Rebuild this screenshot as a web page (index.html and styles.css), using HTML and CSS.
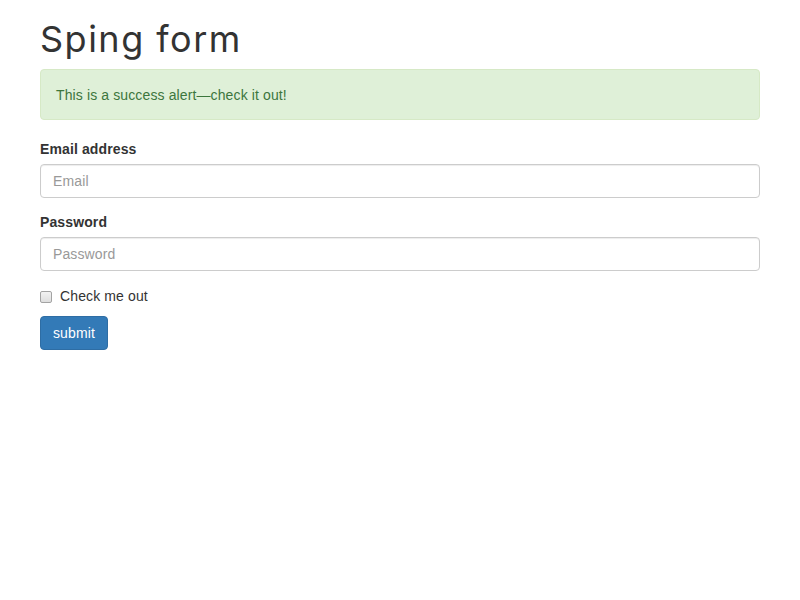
FILE: index.html
```html
<!DOCTYPE html>
<html lang="en">
<head>
<meta charset="utf-8">
<title>Sping form</title>
<link rel="stylesheet" href="styles.css">
</head>
<body>
<div class="container">
  <h1 class="title">Sping form</h1>
  <div class="alert">This is a success alert—check it out!</div>
  <form class="form">
    <div class="form-group">
      <label class="label" for="email">Email address</label>
      <input class="control" id="email" type="email" placeholder="Email">
    </div>
    <div class="form-group">
      <label class="label" for="pwd">Password</label>
      <input class="control" id="pwd" type="password" placeholder="Password">
    </div>
    <div class="checkbox">
      <label class="check-label"><input class="check-input" type="checkbox"> Check me out</label>
    </div>
    <button class="btn" type="button">submit</button>
  </form>
</div>
</body>
</html>
```

FILE: styles.css
```css
* { box-sizing: border-box; }
html, body { margin: 0; padding: 0; }
body {
  font-family: "Liberation Sans", Arial, sans-serif;
  font-size: 14px;
  line-height: 20px;
  letter-spacing: 0.12px;
  color: #333;
  background: #fff;
}
.container {
  width: 720px;
  margin: 0 auto;
}
.title {
  font-family: Inter, "Open Sans", sans-serif;
  font-weight: 400;
  font-size: 36px;
  line-height: 39px;
  margin: 20px 0 10px;
  color: #333;
  letter-spacing: 1.5px;
}
.alert {
  padding: 15px 15px 14px;
  margin-bottom: 20px;
  border: 1px solid #d6e9c6;
  border-radius: 4px;
  background: #dff0d8;
  color: #3c763d;
}
.form { margin: 0; }
.form-group { margin-bottom: 15px; }
.label {
  display: block;
  font-weight: 700;
  line-height: 19px;
  margin-bottom: 5px;
}
.control {
  display: block;
  width: 100%;
  height: 34px;
  padding: 6px 12px;
  font-family: inherit;
  font-size: 14px;
  line-height: 20px;
  letter-spacing: 0.12px;
  color: #555;
  background: #fff;
  border: 1px solid #ccc;
  border-radius: 4px;
  box-shadow: inset 0 1px 1px rgba(0,0,0,.075);
  outline: none;
}
.control::placeholder { color: #999; }
.checkbox {
  margin: 10px 0;
}
.check-label {
  display: flex;
  align-items: center;
  cursor: pointer;
}
.check-input {
  appearance: none;
  -webkit-appearance: none;
  width: 12px;
  height: 12px;
  margin: 1px 8px 0 0;
  border: 1px solid #a3a3a3;
  border-radius: 2px;
  background: linear-gradient(#f2f2f2, #dedede);
}
.btn {
  display: inline-block;
  height: 34px;
  padding: 6px 12px;
  font-family: inherit;
  font-size: 14px;
  line-height: 20px;
  letter-spacing: 0.12px;
  color: #fff;
  background: #337ab7;
  border: 1px solid #2e6da4;
  border-radius: 4px;
  cursor: pointer;
}
```
